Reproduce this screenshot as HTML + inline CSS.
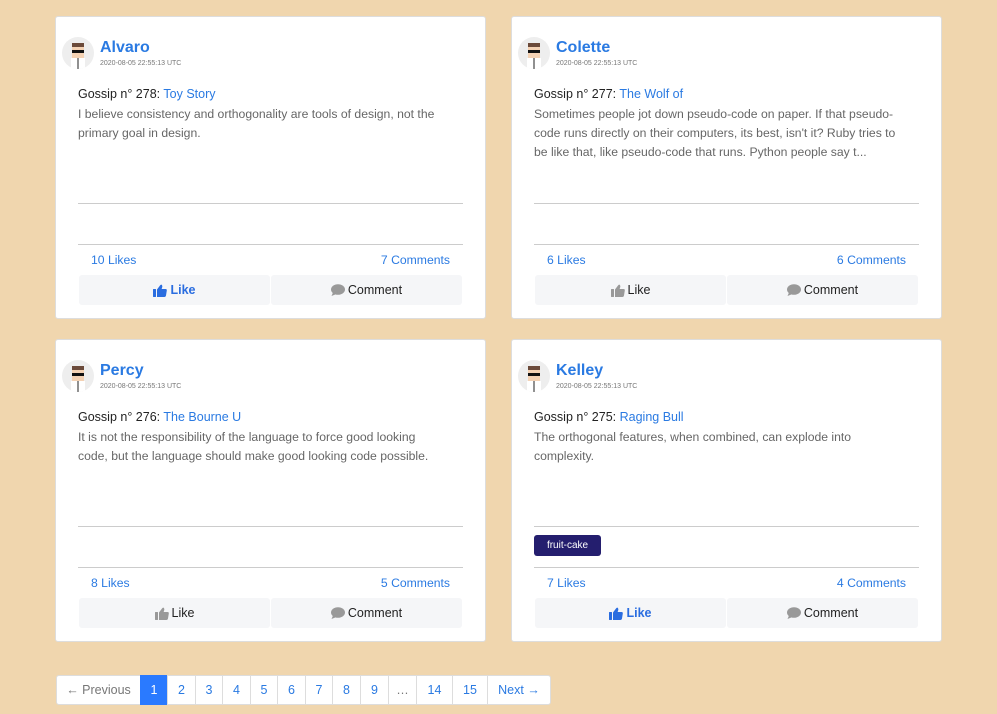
<!DOCTYPE html>
<html><head><meta charset="utf-8"><style>
*{box-sizing:border-box;margin:0;padding:0}
body{width:997px;height:714px;background:#f0d6ae;font-family:"Liberation Sans",sans-serif;position:relative;overflow:hidden}
.card{position:absolute;width:431px;height:303px;background:#fff;border:1px solid #ddd;border-radius:3px}
.av{position:absolute;left:6px;top:20px;width:32px;height:32px;border-radius:50%;background:#eee;overflow:hidden}
.name{position:absolute;left:44px;top:22px;font-size:16px;font-weight:bold;color:#2a7ae2}
.date{position:absolute;left:44px;top:43px;font-size:7px;color:#777}
.g{position:absolute;left:22px;top:70px;font-size:12.5px;color:#222}
.g a{color:#2a7ae2;text-decoration:none}
.b{position:absolute;left:22px;top:88px;width:395px;font-size:12.2px;line-height:19px;color:#666;white-space:nowrap}
.hr{position:absolute;left:22px;width:385px;border-top:1px solid #ccc}
.lk{position:absolute;left:35px;top:236px;font-size:12.2px;color:#2a7ae2}
.cm{position:absolute;right:35px;top:236px;font-size:12.2px;color:#2a7ae2}
.btn{position:absolute;top:258px;width:191px;height:30px;background:#f5f6f8;border-radius:3px;font-size:12.5px;color:#222;display:flex;align-items:center;justify-content:center;gap:3px}
.btn.on{color:#2a6de0;font-weight:bold}
.tag{position:absolute;left:22px;top:195px;width:67px;height:21px;background:#241e6e;color:#fff;font-size:10px;border-radius:3px;text-align:center;line-height:21px}
.pg{position:absolute;top:675px;height:30px;border:1px solid #ddd;background:#fff;color:#2a7ae2;font-size:12.5px;display:flex;align-items:center;justify-content:center}
</style></head><body>
<svg width="0" height="0" style="position:absolute"><defs>
<symbol id="th" viewBox="0 0 14 13"><rect x="0" y="5" width="3" height="8" rx="0.5"/><path d="M4 5.5 L7 1.5 Q8 0 9 1 Q9.6 2 9 4 L8.6 5 H12.5 Q14 5 13.8 6.5 L13 11.5 Q12.7 13 11.3 13 H4 Z"/></symbol>
<symbol id="bu" viewBox="0 0 14 12"><ellipse cx="7" cy="5.5" rx="7" ry="5.3"/><path d="M2 8.5 L0.5 12 L5.5 10 Z"/></symbol>
<symbol id="avt" viewBox="0 0 32 32"><rect x="10" y="6" width="12" height="5" fill="#6b4a3a"/><rect x="10" y="10" width="12" height="11" fill="#f4d2b4"/><rect x="10" y="13" width="12" height="3" fill="#111"/><rect x="9" y="21" width="14" height="12" fill="#fff"/><rect x="15.5" y="21" width="1" height="12" fill="#222"/></symbol>
</defs></svg>
<div class="card" style="left:55px;top:16px">
<div class="av"><svg width="32" height="32"><use href="#avt"/></svg></div>
<div class="name">Alvaro</div><div class="date">2020-08-05 22:55:13 UTC</div>
<div class="g">Gossip n° 278: <a>Toy Story</a></div>
<div class="b">I believe consistency and orthogonality are tools of design, not the<br>primary goal in design.</div>
<div class="hr" style="top:186px"></div><div class="hr" style="top:227px"></div>
<div class="lk">10 Likes</div><div class="cm">7 Comments</div>
<div class="btn on" style="left:23px"><svg width="14" height="13" fill="#2a6de0"><use href="#th"/></svg>Like</div><div class="btn" style="left:215px"><svg width="14" height="12" fill="#999"><use href="#bu"/></svg>Comment</div>
</div>
<div class="card" style="left:511px;top:16px">
<div class="av"><svg width="32" height="32"><use href="#avt"/></svg></div>
<div class="name">Colette</div><div class="date">2020-08-05 22:55:13 UTC</div>
<div class="g">Gossip n° 277: <a>The Wolf of</a></div>
<div class="b">Sometimes people jot down pseudo-code on paper. If that pseudo-<br>code runs directly on their computers, its best, isn't it? Ruby tries to<br>be like that, like pseudo-code that runs. Python people say t...</div>
<div class="hr" style="top:186px"></div><div class="hr" style="top:227px"></div>
<div class="lk">6 Likes</div><div class="cm">6 Comments</div>
<div class="btn" style="left:23px"><svg width="14" height="13" fill="#999"><use href="#th"/></svg>Like</div><div class="btn" style="left:215px"><svg width="14" height="12" fill="#999"><use href="#bu"/></svg>Comment</div>
</div>
<div class="card" style="left:55px;top:339px">
<div class="av"><svg width="32" height="32"><use href="#avt"/></svg></div>
<div class="name">Percy</div><div class="date">2020-08-05 22:55:13 UTC</div>
<div class="g">Gossip n° 276: <a>The Bourne U</a></div>
<div class="b">It is not the responsibility of the language to force good looking<br>code, but the language should make good looking code possible.</div>
<div class="hr" style="top:186px"></div><div class="hr" style="top:227px"></div>
<div class="lk">8 Likes</div><div class="cm">5 Comments</div>
<div class="btn" style="left:23px"><svg width="14" height="13" fill="#999"><use href="#th"/></svg>Like</div><div class="btn" style="left:215px"><svg width="14" height="12" fill="#999"><use href="#bu"/></svg>Comment</div>
</div>
<div class="card" style="left:511px;top:339px">
<div class="av"><svg width="32" height="32"><use href="#avt"/></svg></div>
<div class="name">Kelley</div><div class="date">2020-08-05 22:55:13 UTC</div>
<div class="g">Gossip n° 275: <a>Raging Bull</a></div>
<div class="b">The orthogonal features, when combined, can explode into<br>complexity.</div>
<div class="hr" style="top:186px"></div><div class="tag">fruit-cake</div><div class="hr" style="top:227px"></div>
<div class="lk">7 Likes</div><div class="cm">4 Comments</div>
<div class="btn on" style="left:23px"><svg width="14" height="13" fill="#2a6de0"><use href="#th"/></svg>Like</div><div class="btn" style="left:215px"><svg width="14" height="12" fill="#999"><use href="#bu"/></svg>Comment</div>
</div>
<div class="pg" style="left:56px;width:85px;color:#777;border-radius:3px 0 0 3px">← Previous</div>
<div class="pg" style="left:140px;width:28px;background:#2a7aff;border-color:#2a7aff;color:#fff">1</div>
<div class="pg" style="left:167px;width:29px">2</div>
<div class="pg" style="left:195px;width:28px">3</div>
<div class="pg" style="left:222px;width:29px">4</div>
<div class="pg" style="left:250px;width:28px">5</div>
<div class="pg" style="left:277px;width:29px">6</div>
<div class="pg" style="left:305px;width:28px">7</div>
<div class="pg" style="left:332px;width:29px">8</div>
<div class="pg" style="left:360px;width:29px">9</div>
<div class="pg" style="left:388px;width:29px;color:#777">…</div>
<div class="pg" style="left:416px;width:37px">14</div>
<div class="pg" style="left:452px;width:36px">15</div>
<div class="pg" style="left:487px;width:64px;border-radius:0 3px 3px 0">Next →</div>
</body></html>
